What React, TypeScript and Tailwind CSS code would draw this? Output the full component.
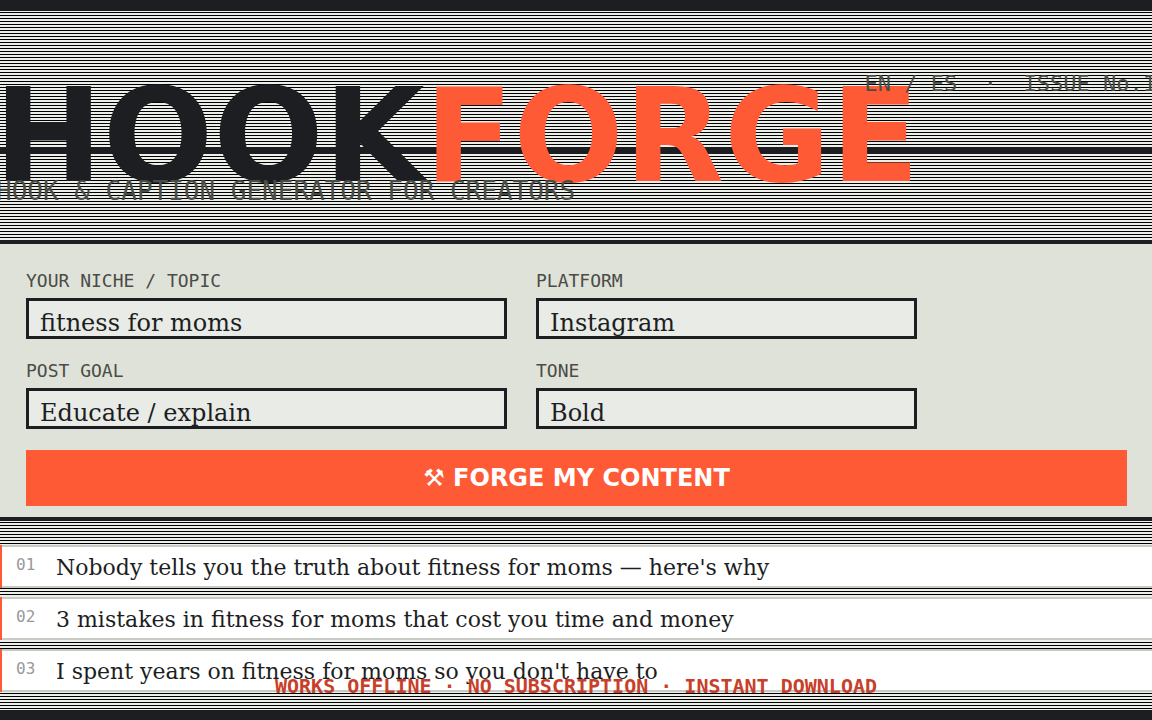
import { useState } from "react";
import type { ReactNode } from "react";

const hooks = [
  "Nobody tells you the truth about fitness for moms — here's why",
  "3 mistakes in fitness for moms that cost you time and money",
  "I spent years on fitness for moms so you don't have to",
];

const mono = "font-['DejaVu_Sans_Mono',monospace]";
const serif = "font-['DejaVu_Serif',serif]";
const sans = "font-['DejaVu_Sans',sans-serif]";

const control = `${serif} block h-[41px] w-full appearance-none rounded-none border-3 border-[#1c1e22] bg-[#e8ebe6] px-[11px] pb-0 text-2xl leading-[27px] text-[#1c1e22] outline-none`;

function Field({ id, label, children }: { id: string; label: string; children: ReactNode }) {
  return (
    <div>
      <label htmlFor={id} className={`${mono} mb-2 block text-lg leading-[18px] text-[#4a4c46]`}>
        {label}
      </label>
      {children}
    </div>
  );
}

function Choice({ id, options }: { id: string; options: string[] }) {
  return (
    <select id={id} defaultValue={options[0]} className={`${control} pt-[9px]`}>
      {options.map((option) => (
        <option key={option}>{option}</option>
      ))}
    </select>
  );
}

export default function App() {
  const [topic, setTopic] = useState("fitness for moms");

  return (
    <div className="relative flex min-h-screen flex-col overflow-hidden border-t-[11px] border-b-[10px] border-[#1c1e22] bg-[repeating-linear-gradient(to_bottom,#eceee9_0px,#eceee9_1px,#000_1px,#000_2px,#eceee9_2px,#eceee9_3px)] text-[#1c1e22]">
      <header className="relative border-b-4 border-[#1c1e22] pt-[60px] pb-9">
        <div className="absolute inset-x-0 top-[136px] h-[7px] bg-[#1c1e22]" />
        <h1 className={`${sans} relative -ml-1.5 text-[130px] leading-[130px] font-bold whitespace-nowrap`}>
          HOOK<span className="text-[#ff5a36]">FORGE</span>
        </h1>
        <p className={`${mono} relative -mt-[23px] -ml-1 text-[26px] leading-[26px] whitespace-nowrap text-[#4a4c46]`}>
          HOOK &amp; CAPTION GENERATOR FOR CREATORS
        </p>
        <p className={`${mono} absolute top-[62px] -right-1 text-[22px] leading-[22px] whitespace-pre text-[#4a4c46]`}>
          {"EN / ES  ·  ISSUE No.1"}
        </p>
      </header>

      <form
        className="border-b-4 border-[#1c1e22] bg-[#dfe2d9] pt-7 pr-[25px] pb-[11px] pl-[26px]"
        onSubmit={(event) => event.preventDefault()}
      >
        <div className="grid grid-cols-[481fr_381fr_181fr] gap-x-[29px] gap-y-[23px]">
          <Field id="topic" label="YOUR NICHE / TOPIC">
            <input
              id="topic"
              type="text"
              value={topic}
              onChange={(event) => setTopic(event.target.value)}
              className={`${control} pt-2`}
            />
          </Field>
          <Field id="platform" label="PLATFORM">
            <Choice id="platform" options={["Instagram"]} />
          </Field>
          <div className="col-start-1">
            <Field id="goal" label="POST GOAL">
              <Choice id="goal" options={["Educate / explain"]} />
            </Field>
          </div>
          <Field id="tone" label="TONE">
            <Choice id="tone" options={["Bold"]} />
          </Field>
        </div>
        <button type="submit" className={`${sans} mt-[21px] block h-14 w-full bg-[#ff5a36] text-2xl font-bold text-white`}>
          ⚒ FORGE MY CONTENT
        </button>
      </form>

      <main className="flex-1 pt-6 pb-[18px]">
        <ol className="flex flex-col gap-[9px]">
          {hooks.map((hook, index) => (
            <li key={hook} className="flex h-[43px]">
              <div className="w-0.5 bg-[#ff5a36]" />
              <div className="flex flex-1 items-start border-y-2 border-[#c8cac4] bg-white pl-3.5">
                <span className={`${mono} w-10 pt-2.5 text-base leading-4 text-[#999999]`}>{`0${index + 1}`}</span>
                <span className={`${serif} pt-2 text-[22px] leading-[26px]`}>{hook}</span>
              </div>
            </li>
          ))}
        </ol>
      </main>

      <footer className={`${mono} absolute inset-x-0 bottom-3.5 text-center text-xl leading-5 font-bold text-[#c8402a]`}>
        WORKS OFFLINE · NO SUBSCRIPTION · INSTANT DOWNLOAD
      </footer>
    </div>
  );
}
